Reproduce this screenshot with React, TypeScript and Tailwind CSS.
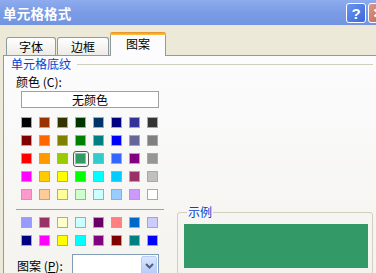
const CJK = "font-['Noto_Sans_CJK_SC','Noto_Sans',sans-serif]";

const standard = [
  ["#000000", "#993300", "#333300", "#003300", "#003366", "#000080", "#333399", "#333333"],
  ["#800000", "#FF6600", "#808000", "#008000", "#008080", "#0000FF", "#666699", "#808080"],
  ["#FF0000", "#FF9900", "#99CC00", "#339966", "#33CCCC", "#3366FF", "#800080", "#969696"],
  ["#FF00FF", "#FFCC00", "#FFFF00", "#00FF00", "#00FFFF", "#00CCFF", "#993366", "#C0C0C0"],
  ["#FF99CC", "#FFCC99", "#FFFF99", "#CCFFCC", "#CCFFFF", "#99CCFF", "#CC99FF", "#FFFFFF"],
];

const chart = [
  ["#9999FF", "#993366", "#FFFFCC", "#CCFFFF", "#660066", "#FF8080", "#0066CC", "#CCCCFF"],
  ["#000080", "#FF00FF", "#FFFF00", "#00FFFF", "#800080", "#800000", "#008080", "#0000FF"],
];

const SELECTED = "#339966";

function Swatches({ rows }: { rows: string[][] }) {
  return (
    <div className="ml-[17px] grid grid-cols-[repeat(8,11px)] gap-[7px]">
      {rows.flat().map((c, i) => (
        <div key={i} className="relative h-[11px] w-[11px]">
          <div
            className="h-full w-full border border-[#a9a9a9]"
            style={{ backgroundColor: c }}
          />
          {c === SELECTED ? (
            <div className="absolute -inset-[2.5px] rounded-[3px] border border-[#5b5b5b]" />
          ) : null}
        </div>
      ))}
    </div>
  );
}

function Tab({ label, active, width }: { label: string; active?: boolean; width: string }) {
  if (active) {
    return (
      <div
        className={`relative z-10 -mb-px ml-px flex h-[24px] flex-col rounded-t-[3px] border-x border-[#919b9c] bg-[#fcfcfe] ${width}`}
      >
        <div className="-mx-px h-[3px] rounded-t-[3px] bg-gradient-to-b from-[#e68b2c] to-[#ffc73c]" />
        <div className="flex flex-1 items-center justify-center pb-[3px] text-[12px] leading-[12px] text-black">
          {label}
        </div>
      </div>
    );
  }
  return (
    <div
      className={`ml-px flex h-[18px] items-center justify-center rounded-t-[3px] border-x border-t border-[#919b9c] bg-gradient-to-b from-[#ffffff] to-[#ecebe6] pt-px text-[12px] leading-[12px] text-black ${width}`}
    >
      {label}
    </div>
  );
}

export default function App() {
  return (
    <div className={`flex h-[273px] w-[376px] flex-col overflow-hidden bg-[#ece9d8] ${CJK}`}>
      {/* title bar */}
      <div className="flex h-[25px] shrink-0 items-center justify-between bg-gradient-to-b from-[#8eabee] via-[#7b9ce5] to-[#7294e0] pl-[3px]">
        <span className="text-[13.5px] font-bold leading-[14px] tracking-[0.2px] text-white">
          单元格格式
        </span>
        <div className="-mr-[12px] flex items-center gap-[2px] pt-px">
          <div className="flex h-[20px] w-[20px] items-center justify-center rounded-[3px] border border-white bg-gradient-to-br from-[#6d96f0] to-[#3a66d8] font-['Liberation_Sans',sans-serif] text-[15px] font-bold leading-none text-white">
            ?
          </div>
          <div className="flex h-[20px] w-[20px] items-center justify-center rounded-[3px] border border-white bg-gradient-to-br from-[#d99a8e] to-[#c0604f]">
            <svg width="10" height="10" viewBox="0 0 10 10">
              <path d="M1.5 1.5 L8.5 8.5 M8.5 1.5 L1.5 8.5" stroke="#ffffff" strokeWidth="2" fill="none" />
            </svg>
          </div>
        </div>
      </div>

      {/* tabs */}
      <div className="flex h-[30px] shrink-0 items-end pl-[5px]">
        <Tab label="字体" width="w-[50px]" />
        <Tab label="边框" width="w-[52px]" />
        <Tab label="图案" width="w-[56px]" active />
      </div>

      {/* tab page */}
      <div className="ml-[3px] flex flex-1 flex-col overflow-hidden border-l border-t border-[#919b9c] bg-gradient-to-b from-[#fcfcfe] to-[#f4f3ee] text-[12px] leading-[12px]">
        <div className="mt-[2px] flex h-[12px] items-center pl-[7px]">
          <span className="text-[#0046d5]">单元格底纹</span>
          <div className="ml-[6px] mr-[3px] h-px flex-1 bg-[#d0d0bf]" />
        </div>

        <div className="flex">
          <div className="flex w-[173px] shrink-0 flex-col">
            <div className="ml-[12px] mt-[6px] h-[12px] text-black">颜色 (C):</div>
            <div className="ml-[17px] mt-[3px] flex h-[17px] w-[138px] items-center justify-center border border-[#a0a0a0] bg-white text-black">
              无颜色
            </div>
            <div className="mt-[9px]">
              <Swatches rows={standard} />
            </div>
            <div className="ml-[12px] mt-[9px] h-px w-[148px] bg-[#8ea2c2]" />
            <div className="mt-[7px]">
              <Swatches rows={chart} />
            </div>
            <div className="mt-[8px] flex items-center">
              <span className="ml-[13px] w-[55px] pt-[2px] text-black">
                图案 (<span className="underline">P</span>):
              </span>
              <div className="flex h-[22px] w-[87px] items-start justify-end border border-[#7f9db9] bg-white pt-[1px] pr-px">
                <div className="flex h-[19px] w-[16px] items-center justify-center rounded-[2px] border border-[#b9cdf9] bg-gradient-to-b from-[#dbe6fe] to-[#b6cbf8]">
                  <svg width="9" height="6" viewBox="0 0 9 6">
                    <path d="M1 1 L4.5 4.5 L8 1" stroke="#4d6185" strokeWidth="2" fill="none" />
                  </svg>
                </div>
              </div>
            </div>
          </div>

          <div className="flex flex-col pt-[135px]">
            <fieldset className="w-[196px] rounded-[3px] border border-[#d0d0bf] pb-[6px] pl-[6px] pr-[4px]">
              <legend className="ml-[3px] px-[1px] text-[12px] leading-[14px] text-[#0046d5]">示例</legend>
              <div className="mt-[5px] h-[44px] w-[184px] bg-[#339966]" />
            </fieldset>
          </div>
        </div>
      </div>
    </div>
  );
}
